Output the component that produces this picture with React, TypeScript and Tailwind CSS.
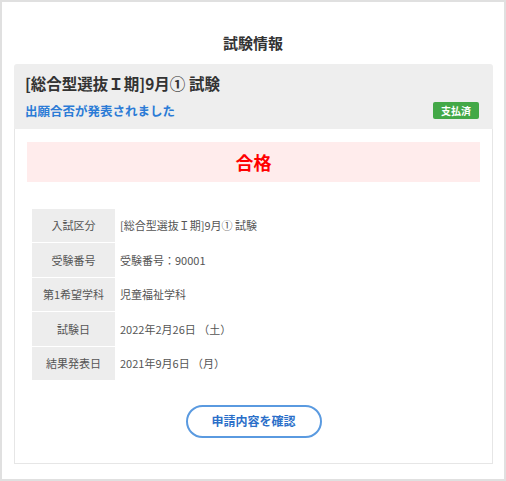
const rows = [
  { label: "入試区分", value: "[総合型選抜Ｉ期]9月① 試験" },
  { label: "受験番号", value: "受験番号：90001" },
  { label: "第1希望学科", value: "児童福祉学科" },
  { label: "試験日", value: "2022年2月26日 （土）" },
  { label: "結果発表日", value: "2021年9月6日 （月）" },
];

export default function App() {
  return (
    <div
      className="w-[506px] h-[481px] border-2 border-[#e0e0e0] bg-white"
      style={{ fontFamily: '"Noto Sans CJK JP", "Noto Sans", sans-serif' }}
    >
      <h2 className="pt-[31px] text-center text-[15px] leading-[20px] font-bold text-[#333]">
        試験情報
      </h2>

      <div className="ml-[12px] mt-[11px] w-[479px]">
        <div className="rounded-t-[3px] bg-[#eeeeee] px-[11px] pt-[9px] pb-[10px]">
          <div className="text-[15.5px] leading-[20px] font-bold text-[#333]">
            [総合型選抜Ｉ期]9月① 試験
          </div>
          <div className="mt-[9px] flex items-center justify-between">
            <span className="text-[12.5px] leading-[17px] font-bold text-[#2b7bd6]">
              出願合否が発表されました
            </span>
            <span className="mr-[3px] flex h-[17px] w-[46px] items-center justify-center rounded-[2px] bg-[#43a847] text-[10px] font-bold text-white">
              支払済
            </span>
          </div>
        </div>

        <div className="border border-t-0 border-[#e6e6e6] px-[12px] pt-[13px] pb-[25px]">
          <div className="flex h-[40px] items-center justify-center bg-[#ffecec] text-[18px] font-bold text-[#ff0000]">
            合格
          </div>

          <div className="mt-[27px] ml-[5px] flex flex-col gap-px">
            {rows.map((r) => (
              <div key={r.label} className="flex h-[33.4px]">
                <div className="flex w-[83px] items-center justify-center bg-[#ededed] text-[11px] text-[#555]">
                  {r.label}
                </div>
                <div className="flex items-center pl-[5px] text-[11px] text-[#555]">
                  {r.value}
                </div>
              </div>
            ))}
          </div>

          <div className="mt-[25px] flex justify-center">
            <button className="h-[33px] w-[136px] rounded-full border-2 border-[#5a9ae0] bg-white text-[12px] font-bold text-[#2b6fc9]">
              申請内容を確認
            </button>
          </div>
        </div>
      </div>
    </div>
  );
}
